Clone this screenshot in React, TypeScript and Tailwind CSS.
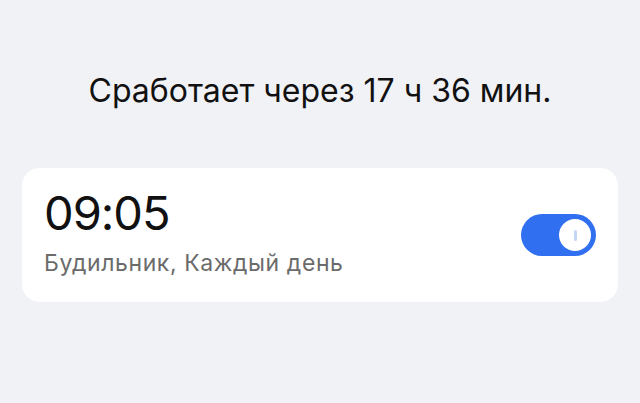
import React, { useState } from 'react'

export default function App() {
  const [enabled, setEnabled] = useState(true)

  return (
    <div
      className="w-[640px] h-[403px] bg-[#f1f2f6] flex flex-col items-center"
      style={{ fontFamily: 'Inter, "Noto Sans", sans-serif' }}
    >
      <h1 className="mt-[71px] text-[32px] leading-[40px] text-[#111] font-normal">
        Сработает через 17 ч 36 мин.
      </h1>

      <div className="mt-[57px] w-[596px] h-[134px] bg-white rounded-[18px] flex items-center justify-between pl-[22px] pr-[22px]">
        <div className="flex flex-col -mt-[6px]">
          <span className="text-[47px] leading-[52px] text-[#111] font-normal tracking-[-1px]">09:05</span>
          <span className="mt-[10px] text-[23px] leading-[28px] text-[#6b6b6b] tracking-[0.6px]">Будильник, Каждый день</span>
        </div>

        <button
          onClick={() => setEnabled(!enabled)}
          className={`relative w-[75px] h-[42px] rounded-full ${enabled ? 'bg-[#2f6ff0]' : 'bg-[#d6d7db]'}`}
        >
          <span
            className={`absolute top-[5px] w-[32px] h-[32px] rounded-full bg-white flex items-center justify-center ${
              enabled ? 'right-[5px]' : 'left-[5px]'
            }`}
          >
            <span className="w-[3px] h-[11px] rounded-full bg-[#c6d6f7]" />
          </span>
        </button>
      </div>
    </div>
  )
}
